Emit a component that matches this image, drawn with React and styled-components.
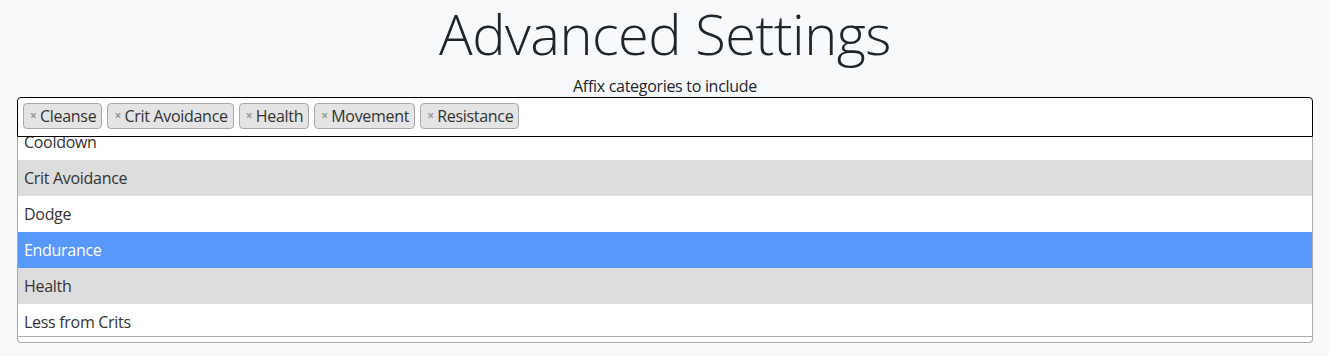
import React, { useLayoutEffect, useRef } from 'react';
import styled, { createGlobalStyle } from 'styled-components';

const GlobalStyle = createGlobalStyle`
  html, body {
    margin: 0;
    padding: 0;
    background: #f8f9fa;
    color: #212529;
    font-family: 'Open Sans', 'Noto Sans', sans-serif;
    font-size: 16px;
    line-height: 1.5;
    letter-spacing: -0.3px;
  }
`;

const Page = styled.div`
  padding: 0 16px 0 17px;
`;

const Title = styled.h1`
  margin: 0;
  font-size: 56px;
  font-weight: 300;
  line-height: 1.2;
  letter-spacing: -0.5px;
  text-align: center;
  color: #212529;
`;

const Label = styled.div`
  margin-top: 8px;
  text-align: center;
  font-size: 16px;
  line-height: 22px;
`;

const Selection = styled.div`
  display: flex;
  flex-wrap: wrap;
  gap: 5px;
  min-height: 38px;
  box-sizing: border-box;
  padding: 5px 5px 7px;
  background: #fff;
  border: 1px solid #000;
  border-radius: 4px 4px 0 0;
`;

const Tag = styled.span`
  display: inline-flex;
  align-items: center;
  height: 26px;
  box-sizing: border-box;
  padding: 0 5px 0 6px;
  background: #e4e4e4;
  border: 1px solid #aaa;
  border-radius: 4px;
  color: #333;
  line-height: 24px;
`;

const Remove = styled.span`
  color: #999;
  font-weight: bold;
  font-size: 12px;
  margin-right: 3.5px;
`;

const Dropdown = styled.div`
  background: #fff;
  border: 1px solid #aaa;
  border-top: none;
  border-radius: 0 0 4px 4px;
  padding-bottom: 5px;
`;

const Results = styled.ul`
  list-style: none;
  margin: 0;
  padding: 0;
  max-height: 199px;
  overflow-y: auto;
  scrollbar-width: none;
  border-bottom: 1px solid #aaa;
  &::-webkit-scrollbar {
    display: none;
  }
`;

const Option = styled.li`
  padding: 6px;
  line-height: 24px;
  background: ${(p) => (p.$highlighted ? '#5897fb' : p.$selected ? '#ddd' : '#fff')};
  color: ${(p) => (p.$highlighted ? '#fff' : '#333')};
`;

const options = [
  'Cleanse',
  'Cooldown',
  'Crit Avoidance',
  'Dodge',
  'Endurance',
  'Health',
  'Less from Crits',
  'Movement',
  'Resistance',
];

const selected = ['Cleanse', 'Crit Avoidance', 'Health', 'Movement', 'Resistance'];

export default function App() {
  const listRef = useRef(null);

  useLayoutEffect(() => {
    if (listRef.current) listRef.current.scrollTop = 49;
  }, []);

  return (
    <Page>
      <GlobalStyle />
      <Title>Advanced Settings</Title>
      <Label>Affix categories to include</Label>
      <Selection>
        {selected.map((s) => (
          <Tag key={s}>
            <Remove>×</Remove>
            {s}
          </Tag>
        ))}
      </Selection>
      <Dropdown>
        <Results ref={listRef}>
          {options.map((o) => (
            <Option key={o} $selected={selected.includes(o)} $highlighted={o === 'Endurance'}>
              {o}
            </Option>
          ))}
        </Results>
      </Dropdown>
    </Page>
  );
}
